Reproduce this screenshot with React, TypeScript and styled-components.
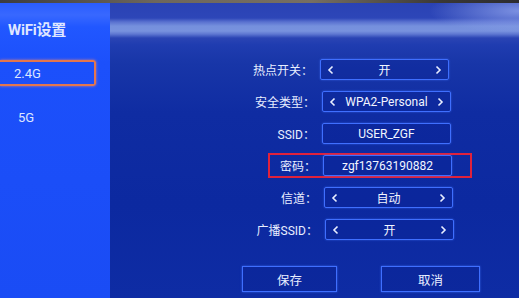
import React from "react";
import styled, { createGlobalStyle } from "styled-components";

const Global = createGlobalStyle`
  html, body { margin: 0; padding: 0; background: #0b2598; }
  body { width: 519px; height: 298px; overflow: hidden; font-family: Roboto, "Noto Sans CJK SC", sans-serif; }
`;

const Screen = styled.div`
  width: 519px;
  height: 298px;
  display: flex;
  flex-direction: column;
  overflow: hidden;
`;

const Bezel = styled.div`
  height: 3px;
  flex-shrink: 0;
  background: linear-gradient(90deg, #3c3c40 0%, #6e675c 30%, #776f62 60%, #3a3836 85%, #2c2c30 100%);
`;

const Main = styled.div`
  flex: 1;
  display: flex;
`;

const Sidebar = styled.div`
  width: 110px;
  flex-shrink: 0;
  display: flex;
  flex-direction: column;
  padding-top: 18px;
  box-sizing: border-box;
  background: linear-gradient(180deg, #2a5cff 0px, #3868ff 12px, #2157ff 24px, #1c50fb 60px, #1a4cf5 100%);
`;

const Title = styled.div`
  padding-left: 8px;
  font-size: 15px;
  line-height: 18px;
  font-weight: 700;
  color: #dfe6ff;
  letter-spacing: -0.2px;
`;

const Menu = styled.div`
  display: flex;
  flex-direction: column;
  gap: 18px;
  margin-top: 21px;
`;

const MenuItem = styled.div<{ $active?: boolean }>`
  width: 96px;
  height: 26px;
  box-sizing: border-box;
  display: flex;
  align-items: center;
  padding-left: ${(p) => (p.$active ? "14px" : "18px")};
  font-size: 13px;
  color: #dde6ff;
  border: 2px solid ${(p) => (p.$active ? "#e4764e" : "transparent")};
  border-left: none;
  border-radius: 0 3px 3px 0;
  box-shadow: ${(p) => (p.$active ? "0 0 3px rgba(255,140,110,0.8)" : "none")};
`;

const Content = styled.div`
  flex: 1;
  display: flex;
  flex-direction: column;
  padding-top: 54px;
  background:
    radial-gradient(ellipse 90px 22px at 100% 8px, rgba(150,170,240,0.75), rgba(150,170,240,0) 100%),
    linear-gradient(180deg, #2a42b4 0px, #2d46b8 15px, #5a72d0 19px, #7590dd 23px, #7892de 28px, #5f78d2 31px, #2a44b4 35px, #1f3cb0 42px, #1836a8 60px, #0f2ca2 110px, #0c29a0 200px, #0e2ca4 100%);
`;

const Form = styled.div`
  display: flex;
  flex-direction: column;
  gap: 7px;
`;

const Row = styled.div<{ $focused?: boolean; $shift: number }>`
  display: flex;
  align-items: center;
  width: 204px;
  height: 25px;
  box-sizing: border-box;
  margin-left: ${(p) => 157 + p.$shift}px;
  border: 2px solid ${(p) => (p.$focused ? "#e0223c" : "transparent")};
`;

const Label = styled.div`
  width: 46px;
  flex-shrink: 0;
  display: flex;
  justify-content: flex-end;
  white-space: nowrap;
  font-size: 12px;
  color: #e8eeff;
`;

const Field = styled.div`
  margin-left: 7px;
  width: 129px;
  height: 100%;
  flex-shrink: 0;
  box-sizing: border-box;
  display: flex;
  align-items: center;
  justify-content: space-between;
  padding: 0 6px;
  border: 1px solid #3f6fff;
  border-radius: 2px;
  box-shadow: 0 0 2px rgba(70,120,255,0.7);
  background: rgba(10, 35, 150, 0.4);
  color: #f2f5ff;
  font-size: 12px;
`;

const Value = styled.span`
  flex: 1;
  text-align: center;
  white-space: nowrap;
`;

const Arrow = styled.svg`
  width: 7px;
  height: 10px;
  flex-shrink: 0;
`;

const Buttons = styled.div`
  display: flex;
  gap: 44px;
  margin-top: 24px;
  margin-left: 132px;
`;

const Button = styled.div<{ $w: number }>`
  width: ${(p) => p.$w}px;
  height: 26px;
  box-sizing: border-box;
  display: flex;
  align-items: center;
  justify-content: center;
  border: 1px solid #3f6fff;
  box-shadow: 0 0 2px rgba(70,120,255,0.7);
  background: rgba(10, 35, 150, 0.5);
  color: #e8eeff;
  font-size: 12.5px;
`;

const Left = () => (
  <Arrow viewBox="0 0 7 10">
    <path d="M5.5 1.5 L2 5 L5.5 8.5" fill="none" stroke="#e8eeff" strokeWidth="1.6" />
  </Arrow>
);
const Right = () => (
  <Arrow viewBox="0 0 7 10">
    <path d="M1.5 1.5 L5 5 L1.5 8.5" fill="none" stroke="#e8eeff" strokeWidth="1.6" />
  </Arrow>
);

type Item = { label: string; value: string; arrows: boolean; focused?: boolean; shift: number };

const items: Item[] = [
  { label: "热点开关：", value: "开", arrows: true, shift: -2 },
  { label: "安全类型：", value: "WPA2-Personal", arrows: true, shift: 0 },
  { label: "SSID：", value: "USER_ZGF", arrows: false, shift: 0 },
  { label: "密码：", value: "zgf13763190882", arrows: false, focused: true, shift: 1 },
  { label: "信道：", value: "自动", arrows: true, shift: 2 },
  { label: "广播SSID：", value: "开", arrows: true, shift: 3 },
];

export default function App() {
  return (
    <>
      <Global />
      <Screen>
        <Bezel />
        <Main>
          <Sidebar>
            <Title>WiFi设置</Title>
            <Menu>
              <MenuItem $active>2.4G</MenuItem>
              <MenuItem>5G</MenuItem>
            </Menu>
          </Sidebar>
          <Content>
            <Form>
              {items.map((it) => (
                <Row key={it.label} $focused={it.focused} $shift={it.shift}>
                  <Label>{it.label}</Label>
                  <Field>
                    {it.arrows && <Left />}
                    <Value>{it.value}</Value>
                    {it.arrows && <Right />}
                  </Field>
                </Row>
              ))}
            </Form>
            <Buttons>
              <Button $w={95}>保存</Button>
              <Button $w={99}>取消</Button>
            </Buttons>
          </Content>
        </Main>
      </Screen>
    </>
  );
}
